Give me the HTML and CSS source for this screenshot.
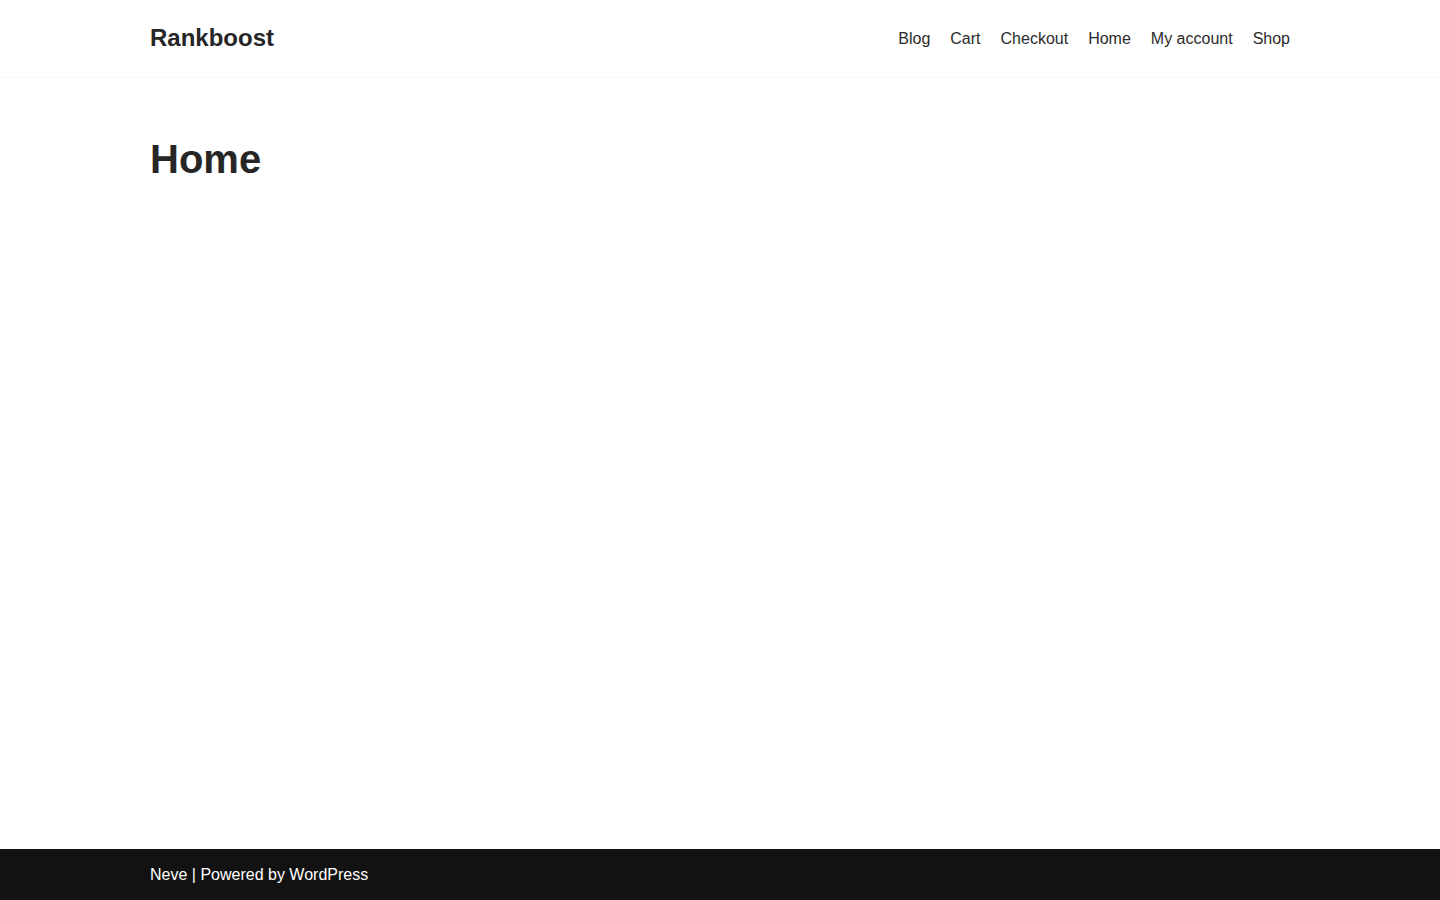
FILE: index.html
```html
<!DOCTYPE html>
<html lang="en">
<head>
<meta charset="utf-8">
<title>Home – Rankboost</title>
<link rel="stylesheet" href="styles.css">
</head>
<body>
<div class="page">
  <header class="site-header">
    <div class="container header-inner">
      <a class="logo" href="#">Rankboost</a>
      <nav class="nav">
        <a href="#">Blog</a>
        <a href="#">Cart</a>
        <a href="#">Checkout</a>
        <a href="#">Home</a>
        <a href="#">My account</a>
        <a href="#">Shop</a>
      </nav>
    </div>
  </header>
  <main class="main">
    <div class="container">
      <h1 class="page-title">Home</h1>
    </div>
  </main>
  <footer class="site-footer">
    <div class="container footer-inner">
      <span><a href="#">Neve</a> | Powered by <a href="#">WordPress</a></span>
    </div>
  </footer>
</div>
</body>
</html>
```
FILE: styles.css
```css
html, body {
  margin: 0;
  padding: 0;
}
body {
  font-family: "Liberation Sans", Arial, sans-serif;
  color: #272626;
  background: #fff;
  font-size: 16px;
  line-height: 1.2;
}
a {
  color: inherit;
  text-decoration: none;
}
.page {
  min-height: 100vh;
  display: flex;
  flex-direction: column;
}
.container {
  width: 1140px;
  margin: 0 auto;
}
.site-header {
  height: 77px;
  border-bottom: 1px solid #f9f9f9;
}
.header-inner {
  height: 100%;
  display: flex;
  align-items: center;
  justify-content: space-between;
}
.logo {
  font-size: 24px;
  font-weight: 700;
  line-height: 1.2;
  color: #272626;
}
.nav {
  display: flex;
  gap: 20px;
  font-size: 16px;
}
.nav a {
  color: #2b2b2b;
}
.main {
  flex: 1;
}
.page-title {
  margin: 57px 0 0;
  font-size: 40px;
  line-height: 1.2;
  font-weight: 700;
  color: #272626;
}
.site-footer {
  height: 51px;
  background: #121212;
  color: #fff;
}
.footer-inner {
  height: 100%;
  display: flex;
  align-items: center;
  font-size: 16px;
}
```
